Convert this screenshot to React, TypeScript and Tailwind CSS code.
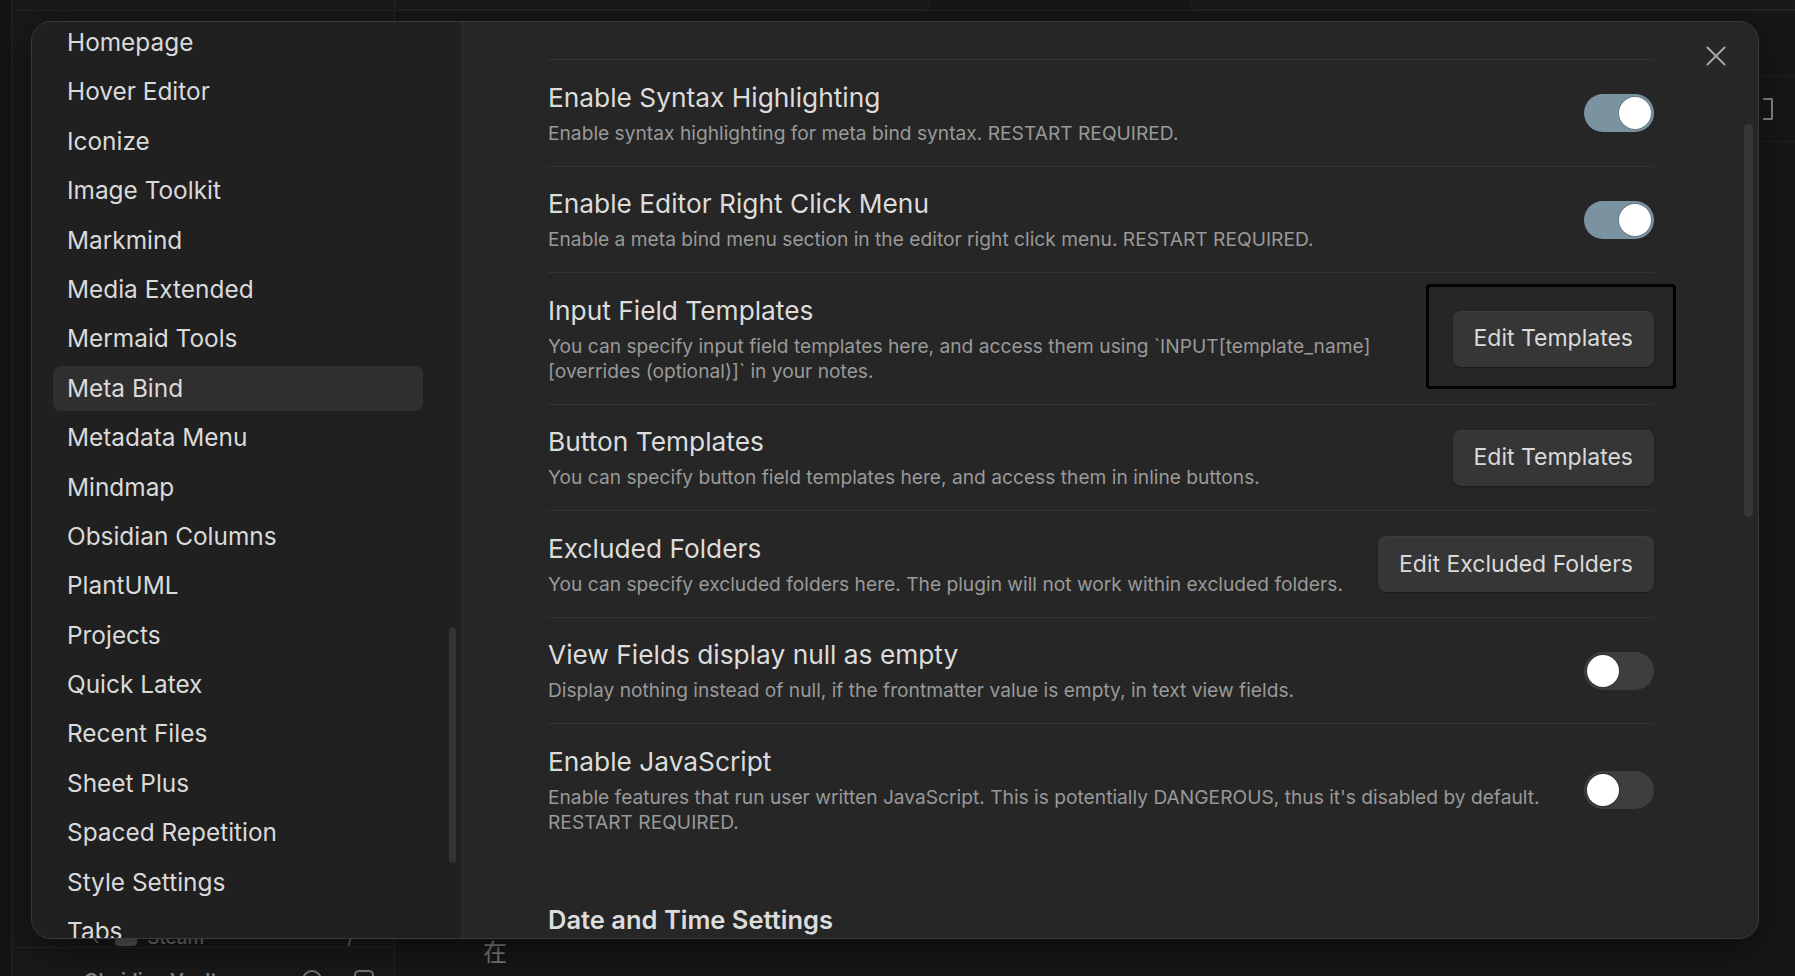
import React from 'react';

const plugins = [
  'Homepage',
  'Hover Editor',
  'Iconize',
  'Image Toolkit',
  'Markmind',
  'Media Extended',
  'Mermaid Tools',
  'Meta Bind',
  'Metadata Menu',
  'Mindmap',
  'Obsidian Columns',
  'PlantUML',
  'Projects',
  'Quick Latex',
  'Recent Files',
  'Sheet Plus',
  'Spaced Repetition',
  'Style Settings',
  'Tabs',
];

function Toggle({ on }: { on: boolean }) {
  return (
    <div
      className={
        on
          ? 'flex h-[38px] w-[70px] shrink-0 items-center justify-end rounded-full bg-[#7b93a1] px-[3px]'
          : 'flex h-[38px] w-[70px] shrink-0 items-center justify-start rounded-full bg-[#3e3e3e] px-[3px]'
      }
    >
      <div className="h-[32px] w-[32px] rounded-full bg-white shadow-[0_0_0_1px_rgba(0,0,0,0.15)]" />
    </div>
  );
}

function Button({ label, focused }: { label: string; focused?: boolean }) {
  return (
    <div className="relative shrink-0">
      {focused && (
        <div className="absolute -top-[27px] -bottom-[22px] -left-[27px] -right-[22px] rounded-[4px] border-[3px] border-black" />
      )}
      <div className="flex h-[56px] items-center rounded-[8px] bg-[#363636] px-[21px] text-[23px] text-[#dadada] shadow-[0_1px_2px_rgba(0,0,0,0.35),inset_0_1px_0_rgba(255,255,255,0.04)]">
        {label}
      </div>
    </div>
  );
}

function SettingRow({ title, desc, children }: { title: string; desc: React.ReactNode; children: React.ReactNode }) {
  return (
    <div className="flex items-center border-t border-[#333333] pt-[20.5px] pb-[20px]">
      <div className="flex-1 pr-[16px]">
        <div className="text-[26.3px] leading-[33px] text-[#dcdcdc]">{title}</div>
        <div className="mt-[7px] text-[19.2px] leading-[25px] text-[#999999]">{desc}</div>
      </div>
      {children}
    </div>
  );
}

export default function App() {
  return (
    <div className="relative h-[976px] w-[1795px] overflow-hidden bg-[#171717] font-['Inter','Noto_Sans',sans-serif]">
      {/* app behind the modal */}
      <div className="flex h-full">
        <div className="w-[12px] border-r border-[#232323] bg-[#141414]" />
        <div className="flex w-[383px] flex-col border-r border-[#262626] bg-[#191919]">
          <div className="h-[11px] border-b border-[#242424]" />
          <div className="flex-1" />
          <div className="flex h-[30px] items-end gap-[10px] border-b border-[#262626] pl-[80px] pr-[40px] text-[19px] leading-[18px] text-[#777]">
            <span className="mr-[6px]">‹</span>
            <div className="mb-[1px] h-[16px] w-[22px] rounded-[4px] bg-[#555]" />
            <span>Steam</span>
            <span className="ml-auto">/</span>
          </div>
          <div className="flex h-[28px] items-start pl-[72px] pt-[22px] text-[19px] font-semibold leading-[22px] text-[#888]">
            <span className="w-[218px]">Obsidian Vault</span>
            <div className="h-[20px] w-[20px] rounded-full border-2 border-[#777]" />
            <div className="ml-[32px] h-[20px] w-[20px] rounded-[5px] border-2 border-[#777]" />
          </div>
        </div>
        <div className="flex flex-1 flex-col">
          <div className="flex h-[11px] gap-[260px] border-b border-[#232323]">
            <div className="w-[535px] rounded-b-[6px] border-b border-r border-[#272727] bg-[#191919]" />
            <div className="flex-1 rounded-bl-[6px] border-b border-l border-[#272727] bg-[#191919]" />
          </div>
          <div className="flex h-[65px] justify-end border-b border-[#212121]" />
          <div className="flex h-[66px] items-center justify-end border-b border-[#212121] pr-[22px]">
            <div className="h-[22px] w-[10px] rounded-r-[2px] border-y-[2px] border-r-[2px] border-[#8a8a8a]" />
          </div>
          <div className="flex-1" />
          <div className="h-[37px] pl-[88px] font-['Noto_Sans_CJK_SC',sans-serif] text-[24px] leading-[24px] text-[#7a7a7a]">
            在
          </div>
        </div>
      </div>

      {/* settings modal */}
      <div className="absolute left-[31px] top-[21px] flex h-[918px] w-[1728px] overflow-hidden rounded-[20px] border border-[#3a3a3a] bg-[#262626] shadow-[0_10px_40px_rgba(0,0,0,0.5)]">
        <div className="relative w-[431px] shrink-0 overflow-hidden border-r border-[#303030] bg-[#202020]">
          <div className="-mt-[2px] flex flex-col gap-[4.4px] pl-[21px]">
            {plugins.map((p) => (
              <div
                key={p}
                className={
                  p === 'Meta Bind'
                    ? 'h-[45px] w-[370px] shrink-0 rounded-[8px] bg-[#2f2f2f] pl-[14px] text-[24.4px] leading-[45px] text-[#dadada]'
                    : 'h-[45px] w-[370px] shrink-0 pl-[14px] text-[24.4px] leading-[45px] text-[#dadada]'
                }
              >
                {p}
              </div>
            ))}
          </div>
          <div className="absolute right-[6px] top-[605px] h-[236px] w-[7px] rounded-full bg-[#343434]" />
        </div>

        <div className="relative flex-1 overflow-hidden">
          <div className="absolute right-[32px] top-[24px]">
            <svg width="20" height="20" viewBox="0 0 20 20" fill="none" stroke="#a8a8a8" strokeWidth="2" strokeLinecap="round">
              <path d="M1.5 1.5 18.5 18.5" />
              <path d="M18.5 1.5 1.5 18.5" />
            </svg>
          </div>
          <div className="absolute right-[5px] top-[102px] h-[393px] w-[9px] rounded-full bg-[#363636]" />

          <div className="ml-[85px] w-[1106px] pt-[37px]">
            <SettingRow title="Enable Syntax Highlighting" desc="Enable syntax highlighting for meta bind syntax. RESTART REQUIRED.">
              <Toggle on />
            </SettingRow>
            <SettingRow
              title="Enable Editor Right Click Menu"
              desc="Enable a meta bind menu section in the editor right click menu. RESTART REQUIRED."
            >
              <Toggle on />
            </SettingRow>
            <SettingRow
              title="Input Field Templates"
              desc="You can specify input field templates here, and access them using `INPUT[template_name][overrides (optional)]` in your notes."
            >
              <Button label="Edit Templates" focused />
            </SettingRow>
            <SettingRow
              title="Button Templates"
              desc="You can specify button field templates here, and access them in inline buttons."
            >
              <Button label="Edit Templates" />
            </SettingRow>
            <SettingRow
              title="Excluded Folders"
              desc="You can specify excluded folders here. The plugin will not work within excluded folders."
            >
              <Button label="Edit Excluded Folders" />
            </SettingRow>
            <SettingRow
              title="View Fields display null as empty"
              desc="Display nothing instead of null, if the frontmatter value is empty, in text view fields."
            >
              <Toggle on={false} />
            </SettingRow>
            <SettingRow
              title="Enable JavaScript"
              desc="Enable features that run user written JavaScript. This is potentially DANGEROUS, thus it's disabled by default. RESTART REQUIRED."
            >
              <Toggle on={false} />
            </SettingRow>
            <div className="pt-[48px] text-[25.5px] font-semibold leading-[33px] text-[#dcdcdc]">Date and Time Settings</div>
          </div>
        </div>
      </div>
    </div>
  );
}
